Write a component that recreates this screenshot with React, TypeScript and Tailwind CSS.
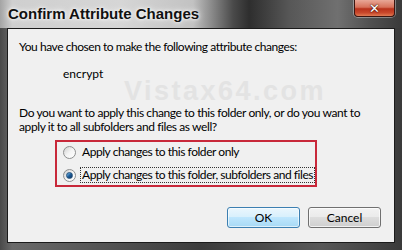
import React from 'react';

const Radio: React.FC<{ checked?: boolean }> = ({ checked }) => (
  <span className="relative inline-block w-[13px] h-[13px] rounded-full border border-[#8e8f8f] bg-gradient-to-br from-[#d0d0d0] via-[#f4f4f4] to-[#ffffff] shrink-0">
    {checked && (
      <span className="absolute left-[2px] top-[2px] w-[7px] h-[7px] rounded-full bg-gradient-to-br from-[#7fc4f4] via-[#1d5e9b] to-[#0c2f5c] border border-[#24507a]" />
    )}
  </span>
);

const App: React.FC = () => {
  return (
    <div className="w-[402px] h-[250px] flex flex-col bg-[linear-gradient(90deg,#4a4a4a_0%,#6a6a6a_3%,#3c3c3c_50%,#585858_80%,#3a3a3a_100%)] overflow-hidden font-['Lato','Liberation_Sans',Arial,sans-serif]">
      {/* title bar */}
      <div className="relative h-[28px] shrink-0 bg-[linear-gradient(90deg,#a4a4a4_0%,#cfcfcf_3%,#d6d6d6_30%,#c2c2c2_48%,#4a4a4a_58%,#2e2e2e_62%,#575757_72%,#707070_84%,#505050_92%,#3a3a3a_100%)]">
        <div className="absolute left-[8px] top-[5px] text-[15px] font-bold text-[#111] leading-[18px] font-['Liberation_Sans',Arial,sans-serif] [text-shadow:0_0_6px_#ffffff,0_0_3px_#ffffff]">
          Confirm Attribute Changes
        </div>
        <div className="absolute left-[354px] top-0 w-[41px] h-[17px] rounded-b-[4px] border border-t-0 border-[#3b1510] bg-[linear-gradient(180deg,#e8a797_0%,#d7715a_45%,#b8321b_55%,#c9482c_80%,#e07a52_100%)] flex items-center justify-center shadow-[0_0_0_1px_rgba(255,255,255,0.35)]">
          <span className="text-white font-bold text-[13px] leading-none font-['DejaVu_Sans',sans-serif] [text-shadow:0_0_2px_#3a0d05,0_0_1px_#3a0d05]">
            ✕
          </span>
        </div>
      </div>

      {/* client area */}
      <div className="flex-1 mx-[7px] mb-[7px] border border-[#1b1b1b] bg-[#f0f0f0] flex flex-col text-black text-[12px] relative">
        <div className="absolute left-[116px] top-[52px] text-[27px] font-bold text-[#e3e3e3] leading-[20px] [letter-spacing:2.5px] select-none font-['Liberation_Sans',Arial,sans-serif]">
          Vistax64.com
        </div>

        <p className="relative pl-[11px] pt-[10px] leading-[15px] [letter-spacing:-0.45px]">
          You have chosen to make the following attribute changes:
        </p>
        <p className="relative pl-[55px] pt-[12px] leading-[15px]">encrypt</p>

        <p className="pl-[11px] pt-[25px] leading-[14px] relative [letter-spacing:-0.4px]">
          Do you want to apply this change to this folder only, or do you want to
          <br />
          apply it to all subfolders and files as well?
        </p>

        <div className="relative ml-[47px] mt-[6px] w-[262px] h-[47px] border-2 border-[#c8283a] flex flex-col justify-center gap-[7px] pl-[6px] [letter-spacing:-0.45px]">
          <label className="flex items-center gap-[4px] leading-[14px]">
            <Radio />
            <span className="px-[1px] border border-transparent whitespace-nowrap">Apply changes to this folder only</span>
          </label>
          <label className="flex items-center gap-[4px] leading-[14px]">
            <Radio checked />
            <span className="border border-dotted border-[#333] px-[1px] whitespace-nowrap">
              Apply changes to this folder, subfolders and files
            </span>
          </label>
        </div>

        <div className="flex justify-end gap-[8px] pr-[13px] mt-auto mb-[14px]">
          <button className="w-[73px] h-[21px] rounded-[3px] border border-[#3c7fb1] bg-[linear-gradient(180deg,#eaf6fd_0%,#d9f0fc_45%,#bee6fd_50%,#a7d9f5_100%)] shadow-[inset_0_0_0_1px_rgba(255,255,255,0.6)] leading-none">
            OK
          </button>
          <button className="w-[73px] h-[21px] rounded-[3px] border border-[#707070] bg-[linear-gradient(180deg,#f2f2f2_0%,#ebebeb_45%,#dddddd_50%,#cfcfcf_100%)] shadow-[inset_0_0_0_1px_rgba(255,255,255,0.7)] leading-none">
            Cancel
          </button>
        </div>
      </div>
    </div>
  );
};

export default App;
